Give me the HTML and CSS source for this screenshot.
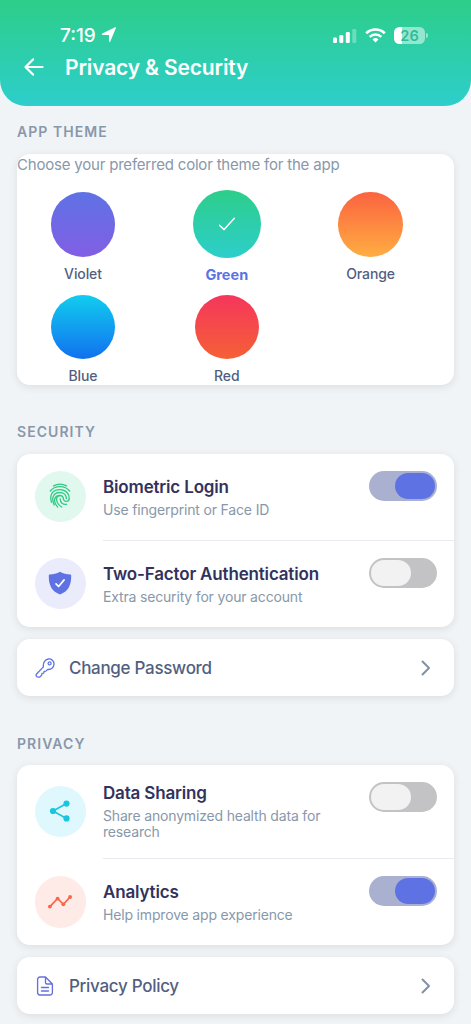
FILE: index.html
```html
<!DOCTYPE html>
<html lang="en">
<head>
<meta charset="utf-8">
<title>Privacy &amp; Security</title>
<link rel="stylesheet" href="styles.css">
</head>
<body>
<header class="header">
  <div class="status">
    <span class="time">7:19</span>
    <svg class="location" width="16" height="16" viewBox="0 0 16 16"><path d="M15 .7 9.300 14.500c-.3.8-1.300.6-1.300-.2V8H1.600C.7 8 .5 7 1.300 6.600L14.200.300c.7-.3 1.100 0 .8.400z" fill="#fff"/></svg>
    <div class="indicators">
      <svg width="24" height="16" viewBox="0 0 24 16" fill="#fff"><rect x="0" y="10.500" width="4" height="5.500" rx="1.200"/><rect x="6.300" y="8" width="4" height="8" rx="1.200"/><rect x="12.800" y="5" width="4" height="11" rx="1.200"/><rect x="19.300" y="2" width="4" height="14" rx="1.200" opacity=".3"/></svg>
      <svg width="21" height="15" viewBox="0 0 21 15" fill="none" stroke="#fff" stroke-width="2.600"><path d="M1.200 5.300a13.300 13.300 0 0 1 18.600 0"/><path d="M4.700 8.900a8.300 8.300 0 0 1 11.600 0"/><path d="m10.500 14.600 3-3.100a4.300 4.300 0 0 0-6 0z" fill="#fff" stroke="none"/></svg>
      <div class="battery"><span class="battery-level">26</span></div>
    </div>
  </div>
  <div class="title-bar">
    <svg width="20" height="18" viewBox="0 0 20 18" fill="none" stroke="#fff" stroke-width="2.200" stroke-linecap="round" stroke-linejoin="round"><path d="M9 1.400 1.500 9 9 16.600M2 9h16.500"/></svg>
    <h1>Privacy &amp; Security</h1>
  </div>
</header>
<main class="content">
  <h2 class="section-label">APP THEME</h2>
  <section class="card theme-card">
    <p class="hint">Choose your preferred color theme for the app</p>
    <div class="themes">
      <div class="theme"><div class="swatch violet"></div><span>Violet</span></div>
      <div class="theme selected"><div class="swatch green"><svg width="18" height="14" viewBox="0 0 18 14" fill="none" stroke="#fff" stroke-width="1.500" stroke-linecap="round" stroke-linejoin="round"><path d="m1.500 8.200 4.600 4.400L16.300 1.200"/></svg></div><span>Green</span></div>
      <div class="theme"><div class="swatch orange"></div><span>Orange</span></div>
      <div class="theme"><div class="swatch blue"></div><span>Blue</span></div>
      <div class="theme"><div class="swatch red"></div><span>Red</span></div>
    </div>
  </section>

  <h2 class="section-label security-label">SECURITY</h2>
  <section class="card">
    <div class="row">
      <div class="icon mint"><svg width="22" height="26" viewBox="0 0 22 26" fill="none" stroke="#30ca85" stroke-width="1.350" stroke-linecap="round"><path d="M4.500 2.900C8.300.9 13.700.9 17.500 2.900"/><path d="M1.300 8C5.700 2.200 16 2 20.600 8"/><path d="M2.400 19.200C.2 10.800 4 6.800 10.700 6.600c6.600-.1 9.900 4.700 9.500 9.200-.3 3.400-5.200 3.500-5.700.2-.3-2.200-1.600-3.500-3.600-3.500-4.900 0-4.400 8.100 1.900 11.500"/><path d="M5.200 22c-3.300-7.300-.5-12.400 5.500-12.500 4.200 0 6.600 2.800 6.700 6.100"/><path d="M8.700 24.100c-5.300-6.100-3.300-11.600 2.200-11.600"/><path d="M11.200 15.800c0 3.800 2.700 6 6.300 5.500"/></svg></div>
      <div class="row-text"><h3>Biometric Login</h3><p>Use fingerprint or Face ID</p></div>
      <div class="toggle on"></div>
    </div>
    <div class="row two-factor">
      <div class="icon lavender"><svg width="24" height="24" viewBox="0 0 24 24"><path d="M12 .8c3.200 1.700 6.600 2.600 10.200 2.800.7 0 1 .5 1 1.100C23.300 13.400 20.800 20.100 12 23.500 3.200 20.100.7 13.400.8 4.700c0-.6.3-1.100 1-1.100C5.400 3.400 8.800 2.500 12 .8z" fill="#5e72e4"/><path d="m8 12.800 2.600 2.700 5.500-6.600" fill="none" stroke="#fff" stroke-width="1.700" stroke-linecap="round" stroke-linejoin="round"/></svg></div>
      <div class="row-text"><h3>Two-Factor Authentication</h3><p>Extra security for your account</p></div>
      <div class="toggle"></div>
    </div>
  </section>
  <a class="card link-card">
    <svg width="20" height="20" viewBox="0 0 20 20" fill="none" stroke="#5e72e4" stroke-width="1.300" stroke-linecap="round" stroke-linejoin="round"><path d="M13.200 1c3.200-.4 6 1.900 5.800 5.200-.2 3.400-3 5.700-6.300 5.200l-1.800 1.700-1.800.2-.3 1.800-1.800.2-.3 1.800-1.700 1.600c-.7.6-3.200.4-3.600-.4-.4-.7-.4-1.600.2-2.300l6.800-7.100C7.800 4.900 10 1.400 13.200 1z"/><circle cx="14.600" cy="5.400" r="1.500"/></svg>
    <span class="link-text">Change Password</span>
    <svg class="chevron" width="10" height="16" viewBox="0 0 10 16"><path d="m1.500 1.500 6.500 6.500-6.500 6.500"/></svg>
  </a>

  <h2 class="section-label privacy-label">PRIVACY</h2>
  <section class="card">
    <div class="row sharing">
      <div class="icon aqua"><svg width="22" height="22" viewBox="0 0 22 22" fill="#1bc5e0"><path d="M17.500 3.500 4 11l13.500 7.500" fill="none" stroke="#1bc5e0" stroke-width="1.600"/><circle cx="17.500" cy="3.600" r="3.100"/><circle cx="4" cy="11" r="3.100"/><circle cx="17.500" cy="18.400" r="3.100"/></svg></div>
      <div class="row-text"><h3>Data Sharing</h3><p>Share anonymized health data for<br>research</p></div>
      <div class="toggle"></div>
    </div>
    <div class="row analytics">
      <div class="icon rose"><svg width="24" height="14" viewBox="0 0 24 14" fill="#fa6548"><path d="m1.900 11.600 7.700-8.200 5.800 5.900 6.800-7.400" fill="none" stroke="#fa6548" stroke-width="1.600"/><circle cx="1.900" cy="11.600" r="1.900"/><circle cx="9.600" cy="3.600" r="1.900"/><circle cx="15.300" cy="9.300" r="1.900"/><circle cx="22.100" cy="2" r="1.900"/></svg></div>
      <div class="row-text"><h3>Analytics</h3><p>Help improve app experience</p></div>
      <div class="toggle on"></div>
    </div>
  </section>
  <a class="card link-card">
    <svg width="20" height="20" viewBox="0 0 20 20" fill="none" stroke="#6470dd" stroke-width="1.350" stroke-linecap="round" stroke-linejoin="round"><path d="M10.500 1H5a2.400 2.400 0 0 0-2.400 2.400v13.200A2.400 2.400 0 0 0 5 19h10a2.400 2.400 0 0 0 2.400-2.400V8zM10.500 1v5.500c0 1 .5 1.500 1.500 1.500h5.400M6.500 11.500h7M6.500 15h7"/></svg>
    <span class="link-text">Privacy Policy</span>
    <svg class="chevron" width="10" height="16" viewBox="0 0 10 16"><path d="m1.500 1.500 6.500 6.500-6.500 6.500"/></svg>
  </a>
</main>
</body>
</html>
```
FILE: styles.css
```css
* { box-sizing: border-box; }
body { margin: 0; height: 1024px; overflow: hidden; background: #f1f4f7; font-family: Inter, "Liberation Sans", sans-serif; }
h1, h2, h3, p { margin: 0; }
svg { display: block; flex: none; }

.header { height: 105.500px; padding: 24px 24px 0; border-radius: 0 0 26px 26px; background: linear-gradient(#2dce89, #2dcecc); color: #fff; }
.status { display: flex; align-items: center; height: 22px; padding: 0 22px 0 36px; }
.time { font-size: 19px; font-weight: 500; letter-spacing: 0; }
.location { margin-left: 5px; }
.indicators { display: flex; align-items: center; gap: 8px; margin-left: auto; }
.battery { position: relative; width: 31px; height: 17px; border-radius: 5.500px; background: linear-gradient(90deg, #fff 27%, #95e6cf 27%); }
.battery::after { content: ""; position: absolute; left: 32px; top: 6px; width: 2px; height: 5px; border-radius: 0 2px 2px 0; background: #95e6cf; }
.battery-level { display: block; text-align: center; font-size: 14.500px; line-height: 17px; font-weight: 600; color: #2fbd98; }
.title-bar { display: flex; align-items: center; height: 26px; margin-top: 8px; gap: 21px; }
.title-bar h1 { font-size: 21px; font-weight: 600; line-height: 26px; letter-spacing: -.15px; white-space: nowrap; padding-top: 1px; }

.content { padding: 0 17px; }
.section-label { height: 18px; margin-top: 17.500px; font-size: 14px; line-height: 18px; font-weight: 600; letter-spacing: 1.050px; color: #8898aa; }
.security-label { margin-top: 38px; }
.privacy-label { margin-top: 38.500px; }

.card { display: block; margin-top: 12.500px; border-radius: 13px; background: #fff; box-shadow: 0 2px 9px rgba(0, 0, 0, .09); overflow: hidden; }
.theme-card { height: 231.500px; }
.hint { font-size: 15px; line-height: 20px; padding-top: 1px; letter-spacing: -.2px; color: #8898aa; white-space: nowrap; }
.themes { display: grid; grid-template-columns: repeat(3, 131px); grid-template-rows: 102.500px 90px; column-gap: 12.800px; padding: 15.500px 0 0 .5px; }
.theme { display: flex; flex-direction: column; align-items: center; gap: 8px; padding-top: 2px; font-size: 14px; line-height: 18px; font-weight: 500; letter-spacing: -.1px; color: #525f7f; }
.swatch { display: flex; align-items: center; justify-content: center; flex: none; width: 64.500px; height: 64.500px; border-radius: 50%; }
.violet { background: linear-gradient(#5e72e4, #825ee4); }
.green { width: 67.500px; height: 67.500px; background: linear-gradient(#2dce89, #2dcecc); }
.orange { background: linear-gradient(#fb6340, #ffad42); }
.blue { background: linear-gradient(#11cdef, #1171ef); }
.red { background: linear-gradient(#f5365c, #f56036); }
.selected { padding-top: 0; font-size: 14.500px; font-weight: 700; letter-spacing: 0; color: #5e72e4; }
.selected .swatch { margin-bottom: .5px; }

.row { position: relative; display: flex; align-items: flex-start; height: 86.500px; padding: 17px 17px 0; }
.row + .row::before { content: ""; position: absolute; left: 86px; right: 0; top: 0; height: 1px; background: #e7eaee; }
.icon { display: flex; align-items: center; justify-content: center; flex: none; width: 51.500px; height: 51.500px; margin: 0 17px 0 .5px; border-radius: 50%; }
.mint { background: #e1f8ef; }
.lavender { background: #eaecfb; }
.aqua { background: #def8fd; }
.rose { background: #feeae7; }
.row-text { flex: 1; min-width: 0; padding-top: 6px; white-space: nowrap; }
.row-text h3 { font-size: 17px; line-height: 21px; font-weight: 600; letter-spacing: -.17px; color: #32325d; }
.row-text p { padding-top: 4px; font-size: 14px; line-height: 16px; letter-spacing: -.17px; color: #8898aa; }
.toggle { width: 68px; height: 30px; flex: none; padding: 2px; border-radius: 15px; background: #c3c3c5; }
.toggle::before { content: ""; display: block; width: 40px; height: 26px; border-radius: 13px; background: #f2f2f2; }
.toggle.on { background: #aab0d0; }
.toggle.on::before { margin-left: auto; background: #5e72e4; }
.two-factor { padding-top: 17.500px; }
.sharing { height: 93px; }
.sharing .icon { margin-top: 3.500px; }
.sharing .row-text { padding-top: 1px; }
.analytics { padding-top: 18px; }

.link-card { display: flex; align-items: center; height: 57px; padding: 0 23px 0 18px; }
.link-text { margin-left: 14px; margin-right: auto; font-size: 17px; font-weight: 500; letter-spacing: -.3px; color: #525f7f; }
.chevron { fill: none; stroke: #8292a5; stroke-width: 2; stroke-linecap: round; stroke-linejoin: round; }
```
